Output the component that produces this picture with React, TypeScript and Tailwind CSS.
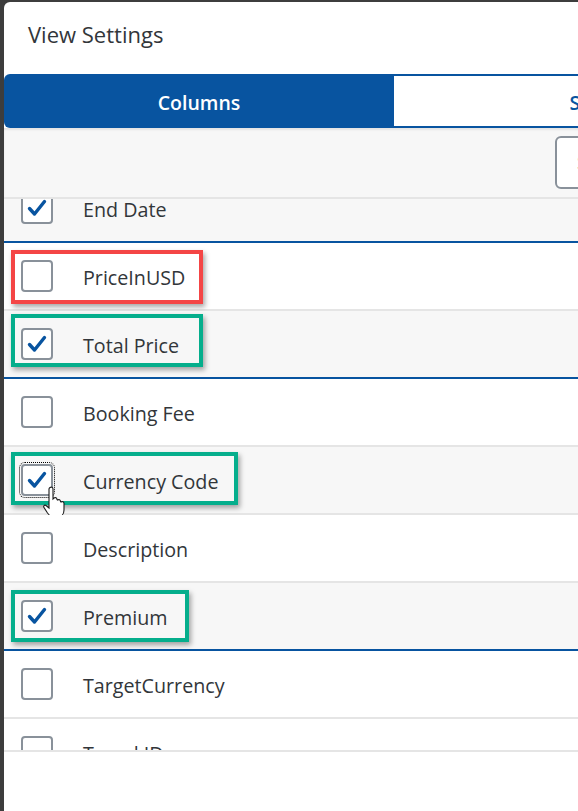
import React from 'react';

type Row = {
  label: string;
  checked: boolean;
  blueLine?: boolean;
  mark?: { color: string; top: string; height: string; width: string };
  focused?: boolean;
};

const rows: Row[] = [
  { label: 'End Date', checked: true, blueLine: true },
  { label: 'PriceInUSD', checked: false, mark: { color: 'border-[#f44545]', top: 'top-[7px]', height: 'h-[54px]', width: 'w-[192px]' } },
  { label: 'Total Price', checked: true, blueLine: true, mark: { color: 'border-[#05ae8c]', top: 'top-[3px]', height: 'h-[53px]', width: 'w-[192px]' } },
  { label: 'Booking Fee', checked: false },
  { label: 'Currency Code', checked: true, focused: true, mark: { color: 'border-[#05ae8c]', top: 'top-[5px]', height: 'h-[53px]', width: 'w-[227px]' } },
  { label: 'Description', checked: false },
  { label: 'Premium', checked: true, blueLine: true, mark: { color: 'border-[#05ae8c]', top: 'top-[7px]', height: 'h-[52px]', width: 'w-[178px]' } },
  { label: 'TargetCurrency', checked: false },
  { label: 'Travel ID', checked: false },
];

function CheckBox({ checked, focused }: { checked: boolean; focused?: boolean }) {
  return (
    <div
      className={`w-[32px] h-[32px] shrink-0 rounded-[4px] border-2 border-[#89919a] bg-white flex items-center justify-center ${
        focused ? 'outline-1 outline-dotted outline-black outline-offset-[1px]' : ''
      }`}
    >
      {checked && (
        <svg width="22" height="22" viewBox="0 0 22 22" fill="none">
          <path d="M3.5 11.5 L8.5 17 L18.5 4.5" stroke="#0854a0" strokeWidth="3.4" strokeLinecap="round" strokeLinejoin="round" />
        </svg>
      )}
    </div>
  );
}

function HandCursor() {
  return (
    <svg width="26" height="36" viewBox="0 0 26 36" className="absolute left-[38px] top-[38px]">
      <path
        d="M8 2.5 C9.5 1.5 11 2.5 11 4 L11 14 L12 13 C13.5 12 15 13 15 14.5 L15.5 15 C17 14 18.5 15 18.5 16.5 L19 17 C20.5 16 22 17 22 18.5 L22 25 C22 29 19.5 32 15.5 32 L11.5 32 C8.5 32 7 30 5.5 28 L2 22.5 C1 21 2.5 19.5 4 20.5 L7 23 L7 4 C7 3.5 7.3 3 8 2.5 Z"
        fill="white"
        stroke="#1a1a1a"
        strokeWidth="1.1"
      />
    </svg>
  );
}

export default function App() {
  return (
    <div className="w-[578px] h-[811px] overflow-hidden bg-[#3d3d3d] flex" style={{ fontFamily: '"Open Sans", sans-serif' }}>
      <div className="ml-[4px] mt-[2px] w-[780px] shrink-0 flex flex-col bg-white rounded-tl-[6px] text-[#32363a]">
        {/* Header */}
        <div className="h-[72px] shrink-0 flex items-start pt-[20px] pl-[24px]">
          <h1 className="text-[22px] leading-[24px]">View Settings</h1>
        </div>

        {/* Tabs */}
        <div className="h-[54px] shrink-0 flex">
          <div className="w-[390px] bg-[#0854a0] rounded-l-[6px] flex items-center justify-center pt-[4px] text-white text-[19.5px] font-semibold">
            Columns
          </div>
          <div className="w-[390px] border-y-2 border-[#0854a0] flex items-center justify-center pt-[4px] text-[#0854a0] text-[19.5px] font-semibold">
            Sort
          </div>
        </div>

        {/* Toolbar */}
        <div className="h-[71px] shrink-0 bg-[#f7f7f7] border-b-2 border-[#e5e5e5] shadow-[inset_0_2px_2px_rgba(0,0,0,0.08)] flex items-center pl-[551px]">
          <div className="h-[53px] w-[200px] border-2 border-[#89919a] rounded-[6px] bg-white flex items-center pl-[20px] text-[#6a6d70] text-[18px]">
            Show Selected
          </div>
        </div>

        {/* List */}
        <div className="h-[551px] shrink-0 overflow-hidden">
          <div className="-mt-[24px]">
            {rows.map((row) => (
              <div
                key={row.label}
                className={`relative h-[68px] flex items-center pl-[17px] border-b-2 ${
                  row.checked ? 'bg-[#f7f7f7]' : 'bg-white'
                } ${row.blueLine ? 'border-[#0854a0]' : 'border-[#e5e5e5]'}`}
              >
                <CheckBox checked={row.checked} focused={row.focused} />
                <span className="ml-[30px] mt-[4px] text-[19.7px] leading-none">{row.label}</span>
                {row.mark && (
                  <div
                    className={`absolute left-[7px] ${row.mark.top} ${row.mark.height} ${row.mark.width} border-4 ${row.mark.color} shadow-[2px_3px_5px_rgba(0,0,0,0.35)]`}
                  />
                )}
                {row.focused && <HandCursor />}
              </div>
            ))}
          </div>
        </div>

        {/* Footer */}
        <div className="flex-1 border-t-2 border-[#e5e5e5] bg-white" />
      </div>
    </div>
  );
}
